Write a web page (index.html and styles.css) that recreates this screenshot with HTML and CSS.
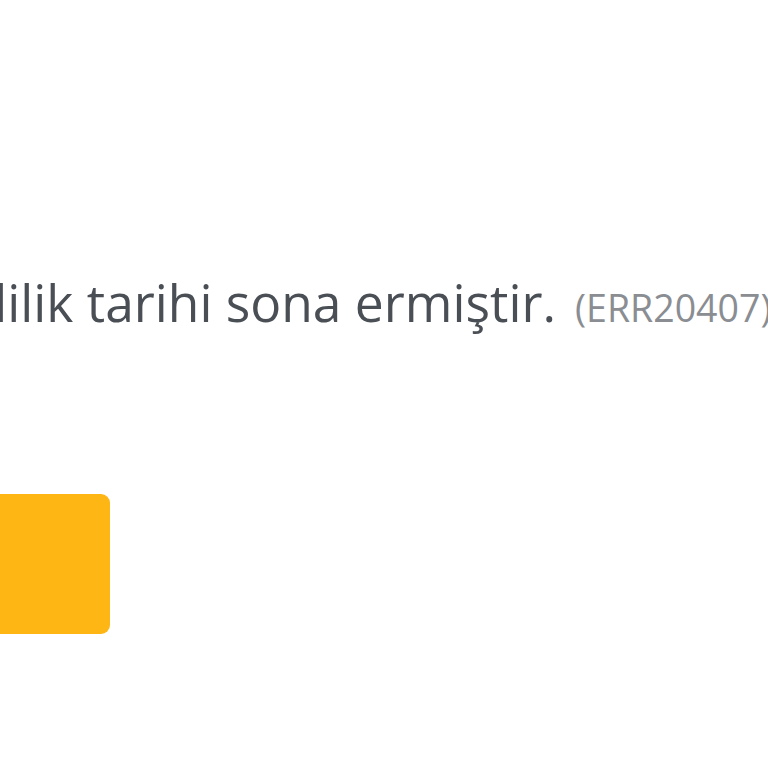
FILE: index.html
```html
<!DOCTYPE html>
<html lang="tr">
<head>
<meta charset="utf-8">
<link rel="stylesheet" href="styles.css">
</head>
<body>
<div class="page">
  <div class="content">
    <p class="message"><span class="msg-text">Kartınızın geçerlilik tarihi sona ermiştir.</span><span class="code">(ERR20407)</span></p>
    <div class="actions">
      <button class="btn">Tamam</button>
    </div>
  </div>
</div>
</body>
</html>
```
FILE: styles.css
```css
html, body {
  margin: 0;
  padding: 0;
  background: #ffffff;
  width: 768px;
  height: 768px;
  overflow: hidden;
}
.page {
  width: 768px;
  height: 768px;
  overflow: hidden;
}
.content {
  width: 2400px;
  margin-left: -1000px;
  padding-top: 264px;
  font-family: "Open Sans", "Liberation Sans", sans-serif;
}
.message {
  margin: 0;
  display: flex;
  align-items: baseline;
  white-space: nowrap;
  gap: 19px;
  height: 76px;
}
.msg-text {
  width: 1556px;
  text-align: right;
  font-size: 51.5px;
  line-height: 76px;
  color: #4a4f56;
}
.code {
  font-size: 37.5px;
  line-height: 50px;
  color: #8a8d92;
}
.actions {
  margin-top: 154px;
  width: 1110px;
  display: flex;
  justify-content: flex-end;
}
.btn {
  width: 300px;
  height: 140px;
  border: none;
  border-radius: 9px;
  background: #fdb614;
  color: #fdb614;
  font-size: 0;
}
```
